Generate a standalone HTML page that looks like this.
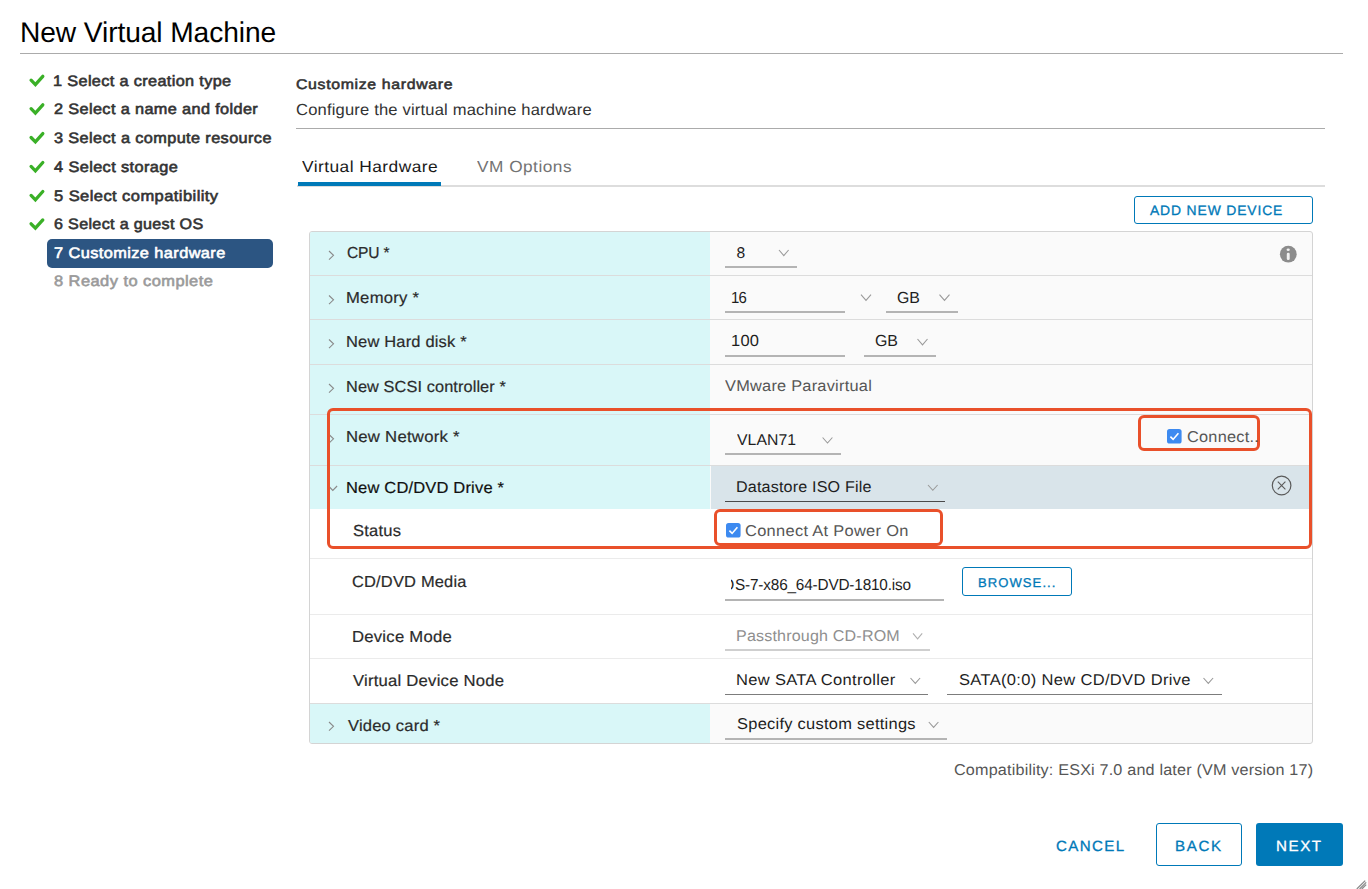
<!DOCTYPE html>
<html><head><meta charset="utf-8">
<style>
html,body{margin:0;padding:0;}
body{width:1368px;height:889px;overflow:hidden;background:#ffffff;position:relative;font-family:"Liberation Sans",sans-serif;}
.a{position:absolute;box-sizing:border-box;}
.t{position:absolute;white-space:nowrap;line-height:1;text-rendering:geometricPrecision;}
.hl{position:absolute;height:1px;background:#dcdcdc;}
svg{position:absolute;overflow:visible;}
</style></head><body>
<!-- header separator -->
<div class="a" style="left:20px;top:53px;width:1323px;height:1px;background:#ababab"></div>
<!-- step highlight -->
<div class="a" style="left:46.8px;top:238.9px;width:226.7px;height:28.7px;border-radius:5px;background:#2c5582"></div>
<!-- checkmarks -->
<svg style="left:0;top:0" width="60" height="240">
 <g fill="none" stroke="#3ab027" stroke-width="3.3" stroke-linecap="round" stroke-linejoin="miter">
  <polyline points="31.1,80.2 35.4,84.6 42.8,76.3"/>
  <polyline points="31.1,108.7 35.4,113.1 42.8,104.8"/>
  <polyline points="31.1,137.5 35.4,141.9 42.8,133.6"/>
  <polyline points="31.1,166.4 35.4,170.8 42.8,162.5"/>
  <polyline points="31.1,195.4 35.4,199.8 42.8,191.5"/>
  <polyline points="31.1,223.8 35.4,228.2 42.8,219.9"/>
 </g>
</svg>
<!-- subtitle separator -->
<div class="a" style="left:296px;top:128px;width:1029px;height:1px;background:#ababab"></div>
<!-- tabs -->
<div class="a" style="left:297px;top:185px;width:1028px;height:2px;background:#dddddd"></div>
<div class="a" style="left:297.5px;top:182px;width:143.5px;height:4px;background:#0079b8"></div>
<!-- add new device -->
<div class="a" style="left:1134px;top:196px;width:179px;height:28px;border:1.2px solid #0079b8;border-radius:3px"></div>
<!-- table -->
<div class="a" style="left:309px;top:230.5px;width:1004px;height:513px;border:1.2px solid #d4d4d4;border-radius:3px;background:#fafafa;overflow:hidden">
</div>
<!-- cyan label column -->
<div class="a" style="left:310px;top:231.5px;width:400.2px;height:277.5px;background:#d9f7f8;border-top-left-radius:2px"></div>
<div class="a" style="left:310px;top:703px;width:400.2px;height:39.5px;background:#d9f7f8;border-bottom-left-radius:2px"></div>
<!-- selected row right -->
<div class="a" style="left:710.5px;top:465.5px;width:601.5px;height:43.5px;background:#d9e4ea"></div>
<!-- white rows -->
<div class="a" style="left:310px;top:509px;width:1002px;height:194px;background:#ffffff"></div>
<!-- row lines -->
<div class="hl" style="left:310px;top:275px;width:1002px"></div>
<div class="hl" style="left:310px;top:319.3px;width:1002px"></div>
<div class="hl" style="left:310px;top:364px;width:1002px"></div>
<div class="hl" style="left:310px;top:414px;width:1002px"></div>
<div class="hl" style="left:310px;top:465px;width:1002px"></div>
<div class="hl" style="left:310px;top:558.3px;width:1002px;background:#ebebeb"></div>
<div class="hl" style="left:310px;top:614px;width:1002px;background:#ebebeb"></div>
<div class="hl" style="left:310px;top:658.3px;width:1002px;background:#ebebeb"></div>
<div class="hl" style="left:310px;top:702.5px;width:1002px"></div>
<!-- row chevrons -->
<svg style="left:0;top:0" width="400" height="760">
 <g fill="none" stroke="#8a8a8a" stroke-width="1.1">
  <polyline points="329,251 333.5,255.3 329,259.6"/>
  <polyline points="329,295.5 333.5,299.8 329,304.1"/>
  <polyline points="329,339.5 333.5,343.8 329,348.1"/>
  <polyline points="329,384 333.5,388.3 329,392.6"/>
  <polyline points="329,434.5 333.5,438.8 329,443.1"/>
  <polyline points="328.5,486 332.8,490.5 337.1,486"/>
  <polyline points="329,722 333.5,726.3 329,730.6"/>
 </g>
</svg>
<!-- info icon -->
<svg style="left:1280px;top:246px" width="17" height="17" viewBox="0 0 17 17">
 <circle cx="8.3" cy="8.2" r="8.4" fill="#8c8c8c"/>
 <ellipse cx="8.2" cy="3.8" rx="1.6" ry="1.3" fill="#f2f2f2"/>
 <rect x="6.8" y="6.8" width="2.9" height="7.2" rx="1.3" fill="#f2f2f2"/>
</svg>
<!-- select underlines -->
<div class="a" style="left:725px;top:266px;width:72px;height:2px;background:#b4b4b4"></div>
<div class="a" style="left:725px;top:310.5px;width:120px;height:2px;background:#b4b4b4"></div>
<div class="a" style="left:886px;top:310.5px;width:71.5px;height:2px;background:#b4b4b4"></div>
<div class="a" style="left:725px;top:354.5px;width:120px;height:2px;background:#b4b4b4"></div>
<div class="a" style="left:864px;top:354.5px;width:72px;height:2px;background:#b4b4b4"></div>
<div class="a" style="left:725.3px;top:453px;width:115.4px;height:2px;background:#b4b4b4"></div>
<div class="a" style="left:725.3px;top:500.5px;width:220px;height:1px;background:#4a4a4a"></div>
<div class="a" style="left:725px;top:598.6px;width:218.7px;height:2px;background:#b4b4b4"></div>
<div class="a" style="left:725.3px;top:649px;width:205.2px;height:2px;background:#cfcfcf"></div>
<div class="a" style="left:725.3px;top:694px;width:202.6px;height:1px;background:#7c7c7c"></div>
<div class="a" style="left:947.2px;top:694px;width:274.4px;height:1px;background:#7c7c7c"></div>
<div class="a" style="left:725.3px;top:737.7px;width:221.4px;height:2px;background:#b4b4b4"></div>
<!-- select chevrons -->
<svg style="left:0;top:0" width="1368" height="760">
 <g fill="none" stroke="#9a9a9a" stroke-width="1.1">
  <polyline points="779,250 783.8,255.6 788.6,250"/>
  <polyline points="861,294.6 866,300.4 871,294.6"/>
  <polyline points="939.5,294.6 944.5,300.4 949.5,294.6"/>
  <polyline points="917.5,339 922.5,344.8 927.5,339"/>
  <polyline points="822.6,437.5 827.5,443 832.4,437.5"/>
  <polyline points="928,485 932.8,490.3 937.6,485"/>
  <polyline points="913,633.4 917.6,638.8 922.2,633.4" stroke="#b0b0b0"/>
  <polyline points="910.5,678 915.3,683.4 920.1,678"/>
  <polyline points="1203.5,678 1208.3,683.4 1213.1,678"/>
  <polyline points="928.8,722 933.6,727.4 938.4,722"/>
 </g>
</svg>
<!-- browse button -->
<div class="a" style="left:962.3px;top:567.2px;width:109.3px;height:28.8px;border:1.2px solid #0079b8;border-radius:3px"></div>
<!-- close icon -->
<svg style="left:1270px;top:473px" width="24" height="24">
 <circle cx="11.6" cy="12.5" r="9.3" fill="none" stroke="#5a5a5a" stroke-width="1.2"/>
 <path d="M7.8 8.7 L15.4 16.3 M15.4 8.7 L7.8 16.3" stroke="#5a5a5a" stroke-width="1.1"/>
</svg>
<!-- checkboxes -->
<svg style="left:1167.4px;top:428.8px" width="15" height="15" viewBox="0 0 15 15">
 <rect x="0" y="0" width="14.6" height="14.6" rx="2.6" fill="#3d8af0"/>
 <polyline points="3.4,7.6 6.1,10.4 11.4,4.2" fill="none" stroke="#fff" stroke-width="1.6"/>
</svg>
<svg style="left:725.5px;top:523px" width="15" height="15" viewBox="0 0 15 15">
 <rect x="0" y="0" width="14.6" height="14.6" rx="2.6" fill="#3d8af0"/>
 <polyline points="3.4,7.6 6.1,10.4 11.4,4.2" fill="none" stroke="#fff" stroke-width="1.6"/>
</svg>
<!-- orange boxes -->
<div class="a" style="left:327px;top:407.6px;width:985px;height:141.6px;border:3.3px solid #e9502a;border-radius:6px"></div>
<div class="a" style="left:1137.6px;top:414.8px;width:122.4px;height:36.6px;border:3.3px solid #e9502a;border-radius:6px"></div>
<div class="a" style="left:714.3px;top:508.6px;width:229px;height:37px;border:3.3px solid #e9502a;border-radius:6px"></div>
<!-- bottom buttons -->
<div class="a" style="left:1155.8px;top:823px;width:86px;height:42.8px;border:1.2px solid #0079b8;border-radius:3px"></div>
<div class="a" style="left:1256.3px;top:823px;width:86.5px;height:42.8px;background:#0079b8;border-radius:3px"></div>
<!-- resize handle -->
<svg style="left:1350px;top:872px" width="18" height="17">
 <path d="M15.2 8.6 L6.8 17 M16.2 10.4 L9.6 17 M16.2 12.6 L11.8 17" stroke="#8c8c8c" stroke-width="1.3"/>
</svg>
<div class="t" style="left:20.29px;top:19.00px;font-size:28.49px;font-weight:normal;color:#000000;letter-spacing:-0.101px;transform:scaleX(0.9895);transform-origin:0 0;">New Virtual Machine</div>
<div class="t" style="left:53.36px;top:74.00px;font-size:15.12px;font-weight:normal;color:#333333;letter-spacing:0.325px;transform:scaleX(1.0773);transform-origin:0 0;-webkit-text-stroke:0.6px currentColor;">1 Select a creation type</div>
<div class="t" style="left:53.78px;top:102.00px;font-size:15.12px;font-weight:normal;color:#333333;letter-spacing:0.343px;transform:scaleX(1.0773);transform-origin:0 0;-webkit-text-stroke:0.6px currentColor;">2 Select a name and folder</div>
<div class="t" style="left:53.98px;top:131.00px;font-size:15.12px;font-weight:normal;color:#333333;letter-spacing:0.357px;transform:scaleX(1.0786);transform-origin:0 0;-webkit-text-stroke:0.6px currentColor;">3 Select a compute resource</div>
<div class="t" style="left:54.23px;top:160.00px;font-size:15.12px;font-weight:normal;color:#333333;letter-spacing:0.359px;transform:scaleX(1.0806);transform-origin:0 0;-webkit-text-stroke:0.6px currentColor;">4 Select storage</div>
<div class="t" style="left:53.94px;top:189.00px;font-size:15.12px;font-weight:normal;color:#333333;letter-spacing:0.385px;transform:scaleX(1.0939);transform-origin:0 0;-webkit-text-stroke:0.6px currentColor;">5 Select compatibility</div>
<div class="t" style="left:53.78px;top:217.00px;font-size:15.12px;font-weight:normal;color:#333333;letter-spacing:0.306px;transform:scaleX(1.0663);transform-origin:0 0;-webkit-text-stroke:0.6px currentColor;">6 Select a guest OS</div>
<div class="t" style="left:53.76px;top:246.00px;font-size:15.12px;font-weight:normal;color:#ffffff;letter-spacing:0.390px;transform:scaleX(1.0801);transform-origin:0 0;-webkit-text-stroke:0.6px currentColor;">7 Customize hardware</div>
<div class="t" style="left:53.89px;top:274.00px;font-size:15.12px;font-weight:normal;color:#9a9a9a;letter-spacing:0.411px;transform:scaleX(1.0881);transform-origin:0 0;-webkit-text-stroke:0.6px currentColor;">8 Ready to complete</div>
<div class="t" style="left:296.47px;top:77.00px;font-size:14.03px;font-weight:normal;color:#333333;letter-spacing:0.577px;transform:scaleX(1.1309);transform-origin:0 0;-webkit-text-stroke:0.55px currentColor;">Customize hardware</div>
<div class="t" style="left:296.16px;top:103.00px;font-size:15.99px;font-weight:normal;color:#333333;letter-spacing:0.173px;transform:scaleX(1.0358);transform-origin:0 0;">Configure the virtual machine hardware</div>
<div class="t" style="left:302.32px;top:160.00px;font-size:16.00px;font-weight:normal;color:#1a1a1a;letter-spacing:0.411px;transform:scaleX(1.0849);transform-origin:0 0;">Virtual Hardware</div>
<div class="t" style="left:476.52px;top:160.00px;font-size:16.00px;font-weight:normal;color:#737373;letter-spacing:0.448px;transform:scaleX(1.0786);transform-origin:0 0;">VM Options</div>
<div class="t" style="left:1150.12px;top:204.00px;font-size:13.66px;font-weight:normal;color:#0079b8;letter-spacing:0.848px;transform:scaleX(1.0167);transform-origin:0 0;-webkit-text-stroke:0.3px currentColor;">ADD NEW DEVICE</div>
<div class="t" style="left:346.51px;top:246.00px;font-size:15.99px;font-weight:normal;color:#2b2b2b;letter-spacing:-0.179px;transform:scaleX(0.9758);transform-origin:0 0;-webkit-text-stroke:0.2px currentColor;">CPU *</div>
<div class="t" style="left:345.93px;top:291.00px;font-size:15.99px;font-weight:normal;color:#2b2b2b;letter-spacing:0.251px;transform:scaleX(1.0411);transform-origin:0 0;-webkit-text-stroke:0.2px currentColor;">Memory *</div>
<div class="t" style="left:345.95px;top:335.00px;font-size:15.99px;font-weight:normal;color:#2b2b2b;letter-spacing:0.165px;transform:scaleX(1.0317);transform-origin:0 0;-webkit-text-stroke:0.2px currentColor;">New Hard disk *</div>
<div class="t" style="left:345.96px;top:380.00px;font-size:15.99px;font-weight:normal;color:#2b2b2b;letter-spacing:0.102px;transform:scaleX(1.0204);transform-origin:0 0;-webkit-text-stroke:0.2px currentColor;">New SCSI controller *</div>
<div class="t" style="left:346.23px;top:430.00px;font-size:15.99px;font-weight:normal;color:#2b2b2b;letter-spacing:0.248px;transform:scaleX(1.0447);transform-origin:0 0;-webkit-text-stroke:0.2px currentColor;">New Network *</div>
<div class="t" style="left:346.25px;top:481.00px;font-size:15.99px;font-weight:normal;color:#111111;letter-spacing:0.177px;transform:scaleX(1.0314);transform-origin:0 0;-webkit-text-stroke:0.2px currentColor;">New CD/DVD Drive *</div>
<div class="t" style="left:352.65px;top:524.00px;font-size:15.99px;font-weight:normal;color:#2b2b2b;letter-spacing:0.200px;transform:scaleX(1.0353);transform-origin:0 0;-webkit-text-stroke:0.2px currentColor;">Status</div>
<div class="t" style="left:352.46px;top:575.00px;font-size:15.99px;font-weight:normal;color:#2b2b2b;letter-spacing:0.182px;transform:scaleX(1.0285);transform-origin:0 0;-webkit-text-stroke:0.2px currentColor;">CD/DVD Media</div>
<div class="t" style="left:351.93px;top:630.00px;font-size:15.99px;font-weight:normal;color:#2b2b2b;letter-spacing:0.243px;transform:scaleX(1.0417);transform-origin:0 0;-webkit-text-stroke:0.2px currentColor;">Device Mode</div>
<div class="t" style="left:353.23px;top:674.00px;font-size:15.99px;font-weight:normal;color:#2b2b2b;letter-spacing:0.213px;transform:scaleX(1.0428);transform-origin:0 0;-webkit-text-stroke:0.2px currentColor;">Virtual Device Node</div>
<div class="t" style="left:347.73px;top:719.00px;font-size:15.99px;font-weight:normal;color:#2b2b2b;letter-spacing:0.184px;transform:scaleX(1.0363);transform-origin:0 0;-webkit-text-stroke:0.2px currentColor;">Video card *</div>
<div class="t" style="left:736.62px;top:246.00px;font-size:15.60px;font-weight:normal;color:#1e1e1e;letter-spacing:0.000px;transform:scaleX(1.0000);transform-origin:0 0;">8</div>
<div class="t" style="left:731.26px;top:291.00px;font-size:15.99px;font-weight:normal;color:#1e1e1e;letter-spacing:-0.754px;transform:scaleX(0.9335);transform-origin:0 0;">16</div>
<div class="t" style="left:897.00px;top:291.00px;font-size:15.99px;font-weight:normal;color:#1e1e1e;letter-spacing:-0.100px;transform:scaleX(0.9931);transform-origin:0 0;">GB</div>
<div class="t" style="left:731.14px;top:334.00px;font-size:15.99px;font-weight:normal;color:#1e1e1e;letter-spacing:0.247px;transform:scaleX(1.0308);transform-origin:0 0;">100</div>
<div class="t" style="left:875.20px;top:334.00px;font-size:15.99px;font-weight:normal;color:#1e1e1e;letter-spacing:-0.059px;transform:scaleX(0.9959);transform-origin:0 0;">GB</div>
<div class="t" style="left:725.33px;top:379.00px;font-size:15.60px;font-weight:normal;color:#565656;letter-spacing:0.239px;transform:scaleX(1.0474);transform-origin:0 0;">VMware Paravirtual</div>
<div class="t" style="left:737.43px;top:433.00px;font-size:15.60px;font-weight:normal;color:#1e1e1e;letter-spacing:0.083px;transform:scaleX(1.0110);transform-origin:0 0;">VLAN71</div>
<div class="t" style="left:1186.77px;top:430.00px;font-size:15.60px;font-weight:normal;color:#565656;letter-spacing:0.233px;transform:scaleX(1.0453);transform-origin:0 0;">Connect..</div>
<div class="t" style="left:736.18px;top:480.00px;font-size:15.60px;font-weight:normal;color:#1e1e1e;letter-spacing:0.162px;transform:scaleX(1.0338);transform-origin:0 0;">Datastore ISO File</div>
<div class="t" style="left:744.77px;top:524.00px;font-size:15.60px;font-weight:normal;color:#565656;letter-spacing:0.282px;transform:scaleX(1.0539);transform-origin:0 0;">Connect At Power On</div>
<div class="t" style="left:734.60px;top:578.00px;font-size:15.84px;font-weight:normal;color:#1e1e1e;letter-spacing:-0.179px;transform:scaleX(0.9689);transform-origin:0 0;">S-7-x86_64-DVD-1810.iso</div>
<div class="t" style="left:978.08px;top:577.00px;font-size:12.79px;font-weight:normal;color:#0079b8;letter-spacing:1.024px;transform:scaleX(1.0227);transform-origin:0 0;-webkit-text-stroke:0.3px currentColor;">BROWSE...</div>
<div class="t" style="left:736.18px;top:629.00px;font-size:15.60px;font-weight:normal;color:#8f8f8f;letter-spacing:0.175px;transform:scaleX(1.0300);transform-origin:0 0;">Passthrough CD-ROM</div>
<div class="t" style="left:736.14px;top:673.00px;font-size:15.60px;font-weight:normal;color:#1e1e1e;letter-spacing:0.297px;transform:scaleX(1.0589);transform-origin:0 0;">New SATA Controller</div>
<div class="t" style="left:958.65px;top:673.00px;font-size:15.60px;font-weight:normal;color:#1e1e1e;letter-spacing:0.311px;transform:scaleX(1.0589);transform-origin:0 0;">SATA(0:0) New CD/DVD Drive</div>
<div class="t" style="left:736.75px;top:717.00px;font-size:15.60px;font-weight:normal;color:#1e1e1e;letter-spacing:0.253px;transform:scaleX(1.0542);transform-origin:0 0;">Specify custom settings</div>
<div class="t" style="left:953.98px;top:763.00px;font-size:15.60px;font-weight:normal;color:#565656;letter-spacing:0.168px;transform:scaleX(1.0374);transform-origin:0 0;">Compatibility: ESXi 7.0 and later (VM version 17)</div>
<div class="t" style="left:1056.18px;top:840.00px;font-size:14.83px;font-weight:normal;color:#0079b8;letter-spacing:1.332px;transform:scaleX(1.0204);transform-origin:0 0;-webkit-text-stroke:0.3px currentColor;">CANCEL</div>
<div class="t" style="left:1174.71px;top:840.00px;font-size:14.83px;font-weight:normal;color:#0079b8;letter-spacing:1.581px;transform:scaleX(1.0219);transform-origin:0 0;-webkit-text-stroke:0.3px currentColor;">BACK</div>
<div class="t" style="left:1275.91px;top:840.00px;font-size:14.83px;font-weight:normal;color:#ffffff;letter-spacing:1.528px;transform:scaleX(1.0218);transform-origin:0 0;-webkit-text-stroke:0.3px currentColor;">NEXT</div>
<div class="a" style="left:731.4px;top:572px;width:6px;height:24px;overflow:hidden"><div class="t" style="left:-9.37px;top:6.00px;font-size:15.84px;color:#1e1e1e">O</div></div>
</body></html>
